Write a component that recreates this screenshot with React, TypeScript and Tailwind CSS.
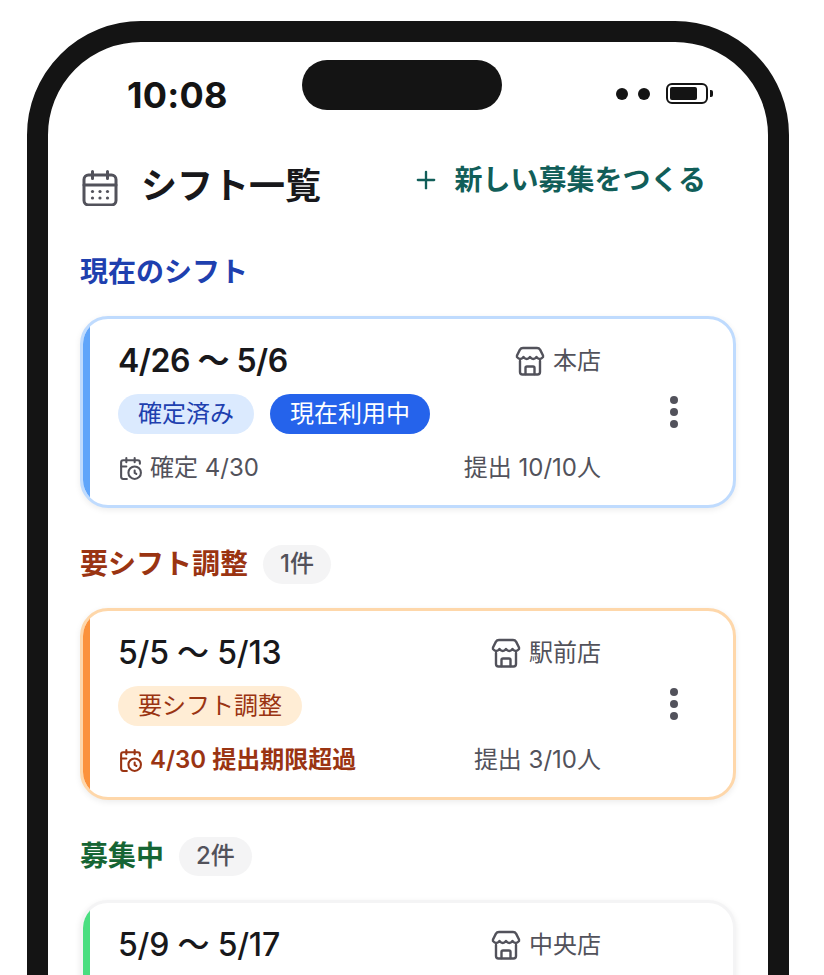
import { CalendarClock, Plus } from "lucide-react";

function StoreIcon() {
  return (
    <svg width="30" height="30" viewBox="0 0 30 30" fill="none" stroke="#52525b" strokeWidth="2.4" strokeLinecap="round" strokeLinejoin="round" className="shrink-0">
      <path d="M8 2H22C23.500 2 24.500 2.700 25.200 3.900L28 9.500V11q-3.250 4 -6.500 0q-3.250 4 -6.500 0q-3.250 4 -6.500 0q-3.250 4 -6.500 0V9.500L4.800 3.900C5.500 2.700 6.500 2 8 2Z" />
      <path d="M5 15V26c0 1.600 1 2.500 2.500 2.500h15c1.500 0 2.500-.9 2.500-2.500V15" />
      <path d="M10.500 28v-6c0-1 .6-1.500 1.500-1.500h6c.9 0 1.500.5 1.500 1.500v6" />
    </svg>
  );
}

function CalendarIcon() {
  return (
    <svg width="36" height="36" viewBox="0 0 36 36" fill="none" className="shrink-0">
      <rect x="2" y="5" width="32" height="30" rx="4.500" stroke="#52525b" strokeWidth="3" />
      <path d="M2 15h32M10.500 1.500v7M25.500 1.500v7" stroke="#52525b" strokeWidth="3" strokeLinecap="round" />
      <g fill="#52525b">
        <circle cx="10.500" cy="21.500" r="1.600" />
        <circle cx="18" cy="21.500" r="1.600" />
        <circle cx="25.500" cy="21.500" r="1.600" />
        <circle cx="10.500" cy="28" r="1.600" />
        <circle cx="18" cy="28" r="1.600" />
        <circle cx="25.500" cy="28" r="1.600" />
      </g>
    </svg>
  );
}

function Kebab() {
  return (
    <div className="flex flex-1 flex-col items-center gap-[4.500px] self-center pl-[14px]">
      <span className="h-[7.500px] w-[7.500px] rounded-full bg-[#52525b]" />
      <span className="h-[7.500px] w-[7.500px] rounded-full bg-[#52525b]" />
      <span className="h-[7.500px] w-[7.500px] rounded-full bg-[#52525b]" />
    </div>
  );
}

function Pill({ className, children }: { className: string; children: React.ReactNode }) {
  return <span className={`flex h-10 items-center rounded-full px-5 text-2xl ${className}`}>{children}</span>;
}

function Count({ children }: { children: React.ReactNode }) {
  return (
    <span className="flex h-[39px] items-center rounded-full bg-[#f4f4f5] px-[17px] text-2xl font-medium text-[#52525b]">
      {children}
    </span>
  );
}

export default function App() {
  return (
    <div className="h-[975px] w-[824px] overflow-hidden bg-white px-[27px] pt-[21px] font-['Inter','Noto_Sans_CJK_JP',sans-serif] text-[#18181b]">
      <div className="relative h-[1200px] w-[762px] rounded-[114px] border-[21px] border-[#141414] bg-white">
        <div className="absolute left-[254px] top-[18px] h-[50px] w-[200px] rounded-full bg-[#141414]" />

        {/* status bar */}
        <div className="flex h-[84px] items-end justify-between pl-[79px] pr-[55px]">
          <span className="mb-[9px] text-[36px] font-bold leading-[44px] tracking-[0.2px] text-[#141414]">10:08</span>
          <div className="mb-[22px] flex items-center">
            <span className="h-3 w-3 rounded-full bg-[#141414]" />
            <span className="ml-[10px] h-3 w-3 rounded-full bg-[#141414]" />
            <span className="ml-4 flex h-[21px] w-[42px] items-center rounded-[6px] border-2 border-[#141414] pl-[2px]">
              <span className="h-[13px] w-[27px] rounded-[2px] bg-[#141414]" />
            </span>
            <span className="ml-[2px] h-[7px] w-[3px] rounded-r-[2px] bg-[#141414]" />
          </div>
        </div>

        <div className="px-[32px]">
          {/* header */}
          <div className="mt-[34px] flex h-[60px] items-start">
            <div className="ml-[2px] mt-[10px]"><CalendarIcon /></div>
            <h1 className="ml-[23px] mt-[4px] text-[36px] font-semibold leading-[44px]">シフト一覧</h1>
            <div className="ml-auto mr-[30px] flex items-center text-[#115e59]">
              <Plus size={28} strokeWidth={2} className="mr-[15px]" />
              <span className="text-[28px] font-semibold leading-[40px]">新しい募集をつくる</span>
            </div>
          </div>

          {/* current */}
          <h2 className="mt-[32px] h-[40px] text-[28px] font-semibold leading-[40px] text-[#1e40af]">現在のシフト</h2>
          <div className="mt-[24px] flex h-[192px] w-[656px] overflow-hidden rounded-[28px] border-[3px] border-[#bfdbfe] bg-white shadow-[0_2px_6px_rgba(0,0,0,0.08)]">
            <div className="w-[7px] bg-[#60a5fa]" />
            <div className="flex flex-1 items-start">
              <div className="ml-[28px] mt-[22px] w-[483px]">
                <div className="flex h-10 items-center justify-between">
                  <span className="text-[32px] font-semibold tracking-[-0.5px]">4/26 〜 5/6</span>
                  <span className="flex items-center gap-2 text-2xl text-[#52525b]"><StoreIcon />本店</span>
                </div>
                <div className="mt-[13px] flex gap-4">
                  <Pill className="bg-[#dbeafe] text-[#1e40af]">確定済み</Pill>
                  <Pill className="bg-[#2563eb] text-white">現在利用中</Pill>
                </div>
                <div className="mt-[20px] flex h-7 items-center justify-between text-2xl text-[#52525b]">
                  <span className="flex items-center gap-[7px]"><CalendarClock size={25} strokeWidth={2} />確定 4/30</span>
                  <span>提出 10/10人</span>
                </div>
              </div>
              <Kebab />
            </div>
          </div>

          {/* needs adjustment */}
          <div className="mt-[36px] flex h-[40px] items-center gap-[15px]">
            <h2 className="text-[28px] font-semibold text-[#9a3412]">要シフト調整</h2>
            <Count>1件</Count>
          </div>
          <div className="mt-[24px] flex h-[192px] w-[656px] overflow-hidden rounded-[28px] border-[3px] border-[#fed7aa] bg-white shadow-[0_2px_6px_rgba(0,0,0,0.08)]">
            <div className="w-[7px] bg-[#fb923c]" />
            <div className="flex flex-1 items-start">
              <div className="ml-[28px] mt-[22px] w-[483px]">
                <div className="flex h-10 items-center justify-between">
                  <span className="text-[32px] font-medium tracking-[-0.2px]">5/5 〜 5/13</span>
                  <span className="flex items-center gap-2 text-2xl text-[#52525b]"><StoreIcon />駅前店</span>
                </div>
                <div className="mt-[13px] flex gap-4">
                  <Pill className="bg-[#ffedd5] text-[#9a3412]">要シフト調整</Pill>
                </div>
                <div className="mt-[20px] flex h-7 items-center justify-between text-2xl text-[#52525b]">
                  <span className="flex items-center gap-[7px] font-semibold text-[#9a3412]"><CalendarClock size={25} strokeWidth={2} />4/30 提出期限超過</span>
                  <span>提出 3/10人</span>
                </div>
              </div>
              <Kebab />
            </div>
          </div>

          {/* recruiting */}
          <div className="mt-[36px] flex h-[40px] items-center gap-[15px]">
            <h2 className="text-[28px] font-semibold text-[#166534]">募集中</h2>
            <Count>2件</Count>
          </div>
          <div className="mt-[24px] flex h-[192px] w-[656px] overflow-hidden rounded-[28px] border-[3px] border-[#f4f4f5] bg-white shadow-[0_2px_6px_rgba(0,0,0,0.08)]">
            <div className="w-[7px] bg-[#4ade80]" />
            <div className="flex flex-1 items-start">
              <div className="ml-[28px] mt-[22px] w-[483px]">
                <div className="flex h-10 items-center justify-between">
                  <span className="text-[32px] font-medium tracking-[-0.2px]">5/9 〜 5/17</span>
                  <span className="flex items-center gap-2 text-2xl text-[#52525b]"><StoreIcon />中央店</span>
                </div>
              </div>
            </div>
          </div>
        </div>
      </div>
    </div>
  );
}
